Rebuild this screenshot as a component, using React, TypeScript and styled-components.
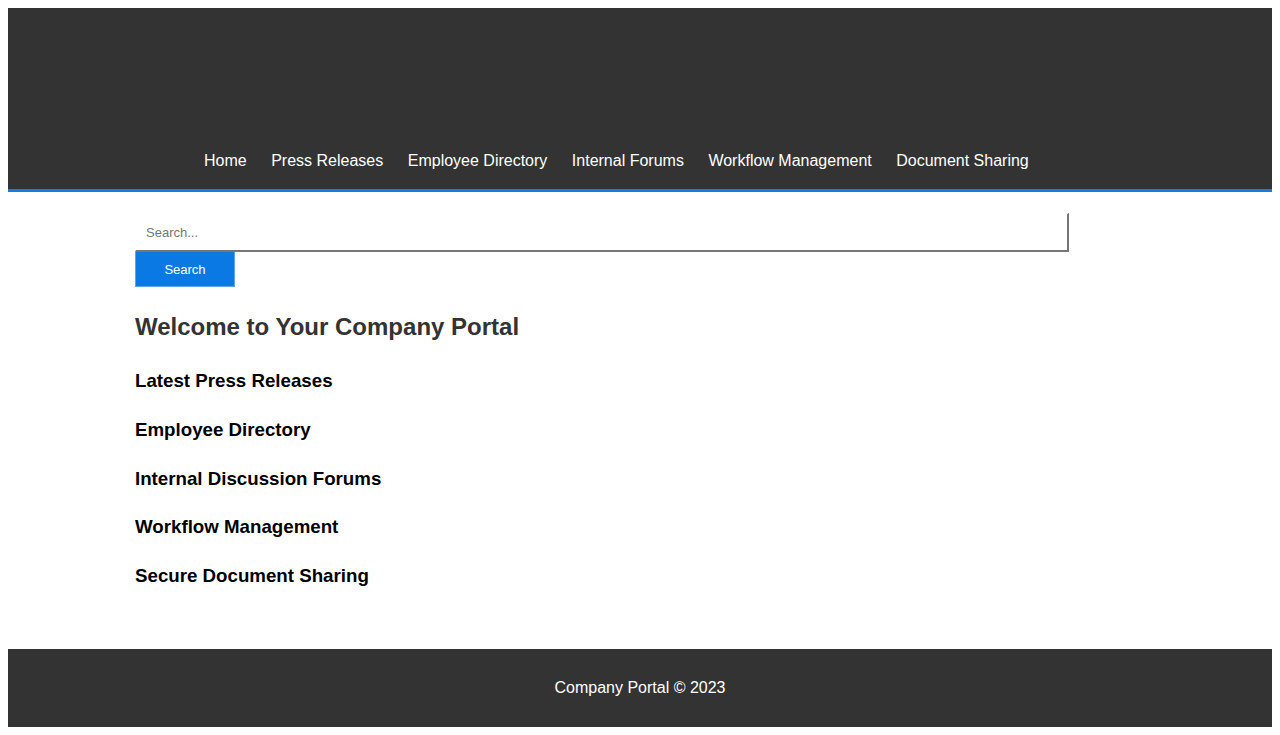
import { createGlobalStyle, styled } from 'styled-components'

const GlobalStyle = createGlobalStyle`
  body {
    margin: 8px;
    font-family: "Liberation Sans", Arial, sans-serif;
    background: #fff;
  }
`

const navLinks = ['Home', 'Press Releases', 'Employee Directory', 'Internal Forums', 'Workflow Management', 'Document Sharing']

const sections = [
  'Latest Press Releases',
  'Employee Directory',
  'Internal Discussion Forums',
  'Workflow Management',
  'Secure Document Sharing',
]

export default function App() {
  return (
    <>
      <GlobalStyle />
      <Header>
        <Nav>
          {navLinks.map((link) => (
            <NavLink key={link} href="#">
              {link}
            </NavLink>
          ))}
        </Nav>
      </Header>
      <Main>
        <SearchForm onSubmit={(e) => e.preventDefault()}>
          <SearchInput type="text" placeholder="Search..." />
          <SearchButton type="submit">Search</SearchButton>
        </SearchForm>
        <Title>Welcome to Your Company Portal</Title>
        <Sections>
          {sections.map((s) => (
            <SectionTitle key={s}>{s}</SectionTitle>
          ))}
        </Sections>
      </Main>
      <Footer>Company Portal © 2023</Footer>
    </>
  )
}

const Header = styled.header`
  display: flex;
  flex-flow: column nowrap;
  justify-content: flex-end;
  box-sizing: content-box;
  height: 162px;
  padding-bottom: 19px;
  background: #333;
  border-bottom: 3px solid #1a7bdc;
`

const Nav = styled.nav`
  display: flex;
  flex-flow: row nowrap;
  gap: 24.5px;
  padding-left: 196px;
`

const NavLink = styled.a`
  color: #fff;
  text-decoration: none;
  font-size: 16px;
  line-height: 18.4px;
`

const Main = styled.main`
  padding: 21px 0 62px 127px;
`

const SearchForm = styled.form`
  display: flex;
  flex-flow: column nowrap;
  align-items: flex-start;
  width: 934px;
`

const SearchInput = styled.input`
  box-sizing: border-box;
  width: 100%;
  height: 39px;
  padding: 0 10px;
  border-style: solid;
  border-width: 1px 2px 2px 1px;
  border-color: #fff #767676 #767676 #fff;
  font-family: "Liberation Sans", Arial, sans-serif;
  font-size: 13px;
  outline: none;

  &::placeholder {
    color: #757575;
  }
`

const SearchButton = styled.button`
  box-sizing: border-box;
  width: 100px;
  height: 35px;
  background: #0a79e3;
  border: 1px solid #5aa5ee;
  border-top: none;
  color: #fff;
  font-family: "Liberation Sans", Arial, sans-serif;
  font-size: 13px;
  cursor: pointer;
`

const Title = styled.h2`
  margin: 26px 0 29px;
  font-size: 24px;
  font-weight: bold;
  color: #333;
`

const Sections = styled.div`
  display: flex;
  flex-flow: column nowrap;
  gap: 27.25px;
`

const SectionTitle = styled.h3`
  margin: 0;
  font-size: 18.72px;
  line-height: 21.5px;
  font-weight: bold;
  color: #000;
`

const Footer = styled.footer`
  display: flex;
  align-items: center;
  justify-content: center;
  height: 78px;
  background: #333;
  color: #fff;
  font-size: 16px;
`
